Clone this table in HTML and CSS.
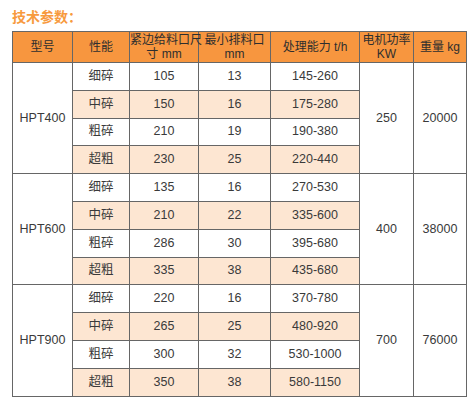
FILE: index.html
```html
<!DOCTYPE html>
<html lang="zh">
<head>
<meta charset="utf-8">
<link rel="stylesheet" href="styles.css">
</head>
<body>
<div class="wrap">
  <h2 class="title">技术参数：</h2>
  <table class="spec">
    <colgroup>
      <col class="c1"><col class="c2"><col class="c3"><col class="c4"><col class="c5"><col class="c6"><col class="c7">
    </colgroup>
    <thead>
      <tr>
        <th>型号</th>
        <th>性能</th>
        <th>紧边给料口尺<br>寸 mm</th>
        <th>最小排料口<br>mm</th>
        <th>处理能力 t/h</th>
        <th>电机功率<br>KW</th>
        <th>重量 kg</th>
      </tr>
    </thead>
    <tbody>
      <tr><td rowspan="4">HPT400</td><td>细碎</td><td>105</td><td>13</td><td>145-260</td><td rowspan="4">250</td><td rowspan="4">20000</td></tr>
      <tr class="alt"><td>中碎</td><td>150</td><td>16</td><td>175-280</td></tr>
      <tr><td>粗碎</td><td>210</td><td>19</td><td>190-380</td></tr>
      <tr class="alt"><td>超粗</td><td>230</td><td>25</td><td>220-440</td></tr>
      <tr><td rowspan="4">HPT600</td><td>细碎</td><td>135</td><td>16</td><td>270-530</td><td rowspan="4">400</td><td rowspan="4">38000</td></tr>
      <tr class="alt"><td>中碎</td><td>210</td><td>22</td><td>335-600</td></tr>
      <tr><td>粗碎</td><td>286</td><td>30</td><td>395-680</td></tr>
      <tr class="alt"><td>超粗</td><td>335</td><td>38</td><td>435-680</td></tr>
      <tr><td rowspan="4">HPT900</td><td>细碎</td><td>220</td><td>16</td><td>370-780</td><td rowspan="4">700</td><td rowspan="4">76000</td></tr>
      <tr class="alt"><td>中碎</td><td>265</td><td>25</td><td>480-920</td></tr>
      <tr><td>粗碎</td><td>300</td><td>32</td><td>530-1000</td></tr>
      <tr class="alt"><td>超粗</td><td>350</td><td>38</td><td>580-1150</td></tr>
    </tbody>
  </table>
</div>
</body>
</html>
```
FILE: styles.css
```css
html, body {
  margin: 0;
  padding: 0;
  background: #ffffff;
}
body {
  font-family: "Liberation Sans", "Noto Sans CJK SC", sans-serif;
  color: #333333;
}
.wrap {
  padding: 8px 4px 0 12px;
}
.title {
  margin: 0 0 6px 0;
  font-size: 14px;
  line-height: 17px;
  font-weight: bold;
  color: #f79a3e;
  font-family: "Noto Sans CJK SC", sans-serif;
}
.spec {
  border-collapse: collapse;
  table-layout: fixed;
  width: 454px;
  font-size: 12.5px;
}
.c1 { width: 60px; }
.c2 { width: 57px; }
.c3 { width: 69px; }
.c4 { width: 72px; }
.c5 { width: 89px; }
.c6 { width: 54px; }
.c7 { width: 53px; }
.spec th, .spec td {
  border: 1px solid #666666;
  text-align: center;
  vertical-align: middle;
  padding: 0;
}
.spec th {
  background: #f7963f;
  font-weight: normal;
  height: 30px;
  line-height: 14px;
  color: #2e2e2e;
  font-size: 12px;
  white-space: nowrap;
  overflow: visible;
}
.spec td {
  height: 26.8px;
  line-height: 15px;
  color: #3a3a3a;
}
.spec tr.alt td {
  background: #fde6d2;
}
.spec tr.alt td[rowspan] {
  background: #ffffff;
}
```
